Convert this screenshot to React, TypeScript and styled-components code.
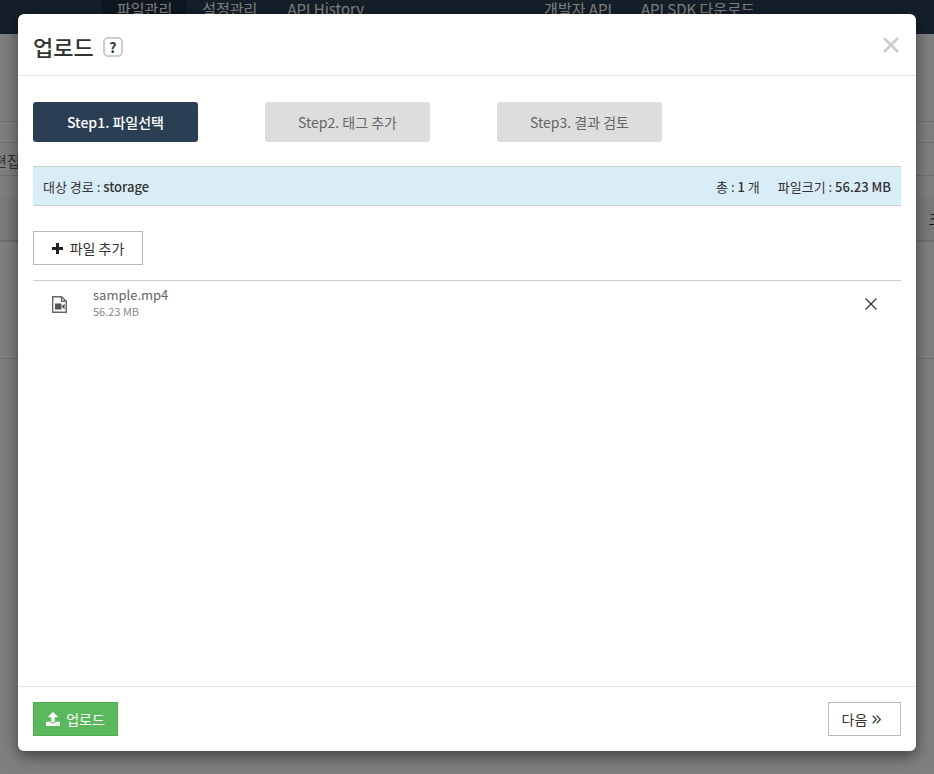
import * as React from "react";
import styled, { createGlobalStyle } from "styled-components";
import { FaUpload } from "react-icons/fa";

const GlobalStyle = createGlobalStyle`
  html, body {
    margin: 0;
    padding: 0;
    height: 100%;
    overflow: hidden;
    background: #fff;
    font-family: "Noto Sans CJK KR", "Noto Sans", sans-serif;
    font-size: 14px;
    color: #333;
  }
  * {
    box-sizing: border-box;
  }
`;

/* page behind the dialog */
const Page = styled.div`
  height: 774px;
  overflow: hidden;
`;

const TopBar = styled.div`
  display: flex;
  height: 34px;
  padding-left: 102px;
  background: #2a3f54;
`;

const NavItem = styled.div<{ $active?: boolean; $gap?: number }>`
  height: 34px;
  margin-top: -11px;
  padding: 0 15px;
  margin-right: ${(p) => p.$gap ?? 0}px;
  line-height: 40px;
  font-size: 15px;
  white-space: nowrap;
  color: #fff;
  background: ${(p) => (p.$active ? "#1f3040" : "transparent")};
`;

const BackRow = styled.div<{ $height: number; $shade?: boolean; $thick?: boolean; $plain?: boolean }>`
  display: flex;
  align-items: center;
  justify-content: space-between;
  height: ${(p) => p.$height}px;
  border-bottom: ${(p) => (p.$plain ? "none" : `${p.$thick ? 2 : 1}px solid #ddd`)};
  background: ${(p) => (p.$shade ? "#f5f5f5" : "#fff")};
  white-space: nowrap;
  overflow: hidden;
`;

const BackLabel = styled.span<{ $right?: boolean }>`
  font-size: 15px;
  color: ${(p) => (p.$right ? "#333" : "#666")};
  margin-top: ${(p) => (p.$right ? "0" : "2px")};
  margin-left: ${(p) => (p.$right ? "auto" : "-7px")};
  margin-right: ${(p) => (p.$right ? "-22px" : "0")};
`;

const Overlay = styled.div`
  position: absolute;
  inset: 0;
  background: rgba(0, 0, 0, 0.5);
`;

/* dialog */
const Dialog = styled.div`
  position: absolute;
  left: 18px;
  top: 14px;
  width: 898px;
  height: 737px;
  display: flex;
  flex-direction: column;
  background: #fff;
  border-radius: 6px;
  box-shadow: 0 5px 15px rgba(0, 0, 0, 0.5);
`;

const Header = styled.div`
  display: flex;
  align-items: center;
  height: 62px;
  padding: 0 17px 0 15px;
  border-bottom: 1px solid #e5e5e5;
`;

const Title = styled.h4`
  margin: 2px 0 0;
  font-size: 22px;
  font-weight: 500;
  line-height: 30px;
  color: #333;
`;

const HelpBadge = styled.span`
  display: flex;
  align-items: center;
  justify-content: center;
  width: 20px;
  height: 20px;
  margin: 4px 0 0 9px;
  border: 2px solid #ccc;
  border-radius: 5px;
  font-size: 14px;
  font-weight: 700;
  color: #333;
`;

const CloseIcon = styled.svg`
  display: block;
  width: 16px;
  height: 16px;
  margin-left: auto;
  margin-top: 1px;
`;

const Body = styled.div`
  flex: 1;
  padding: 26px 15px 0;
`;

const Steps = styled.div`
  display: flex;
  gap: 67px;
`;

const Step = styled.div<{ $active?: boolean }>`
  display: flex;
  align-items: center;
  justify-content: center;
  width: 165px;
  height: 40px;
  border-radius: 3px;
  font-size: 14px;
  font-weight: ${(p) => (p.$active ? 500 : 400)};
  color: ${(p) => (p.$active ? "#fff" : "#666")};
  background: ${(p) => (p.$active ? "#2a3f54" : "#ddd")};
`;

const InfoBar = styled.div`
  display: flex;
  align-items: center;
  justify-content: space-between;
  height: 40px;
  margin-top: 24px;
  padding: 0 10px;
  background: #d9edf7;
  border-top: 1px solid #ccc;
  border-bottom: 1px solid #ccc;
  font-size: 13px;
  color: #333;

  b {
    font-weight: 500;
  }
`;

const InfoRight = styled.div`
  display: flex;
  gap: 18px;
`;

const AddButton = styled.button`
  display: flex;
  align-items: center;
  justify-content: center;
  gap: 7px;
  width: 110px;
  height: 34px;
  margin-top: 25px;
  padding: 0;
  background: #fff;
  border: 1px solid #bbb;
  font: inherit;
  color: #333;
`;

const PlusIcon = styled.svg`
  display: block;
  width: 11px;
  height: 11px;
`;

const FileList = styled.div`
  margin-top: 15px;
  border-top: 1px solid #ccc;
`;

const FileRow = styled.div`
  display: flex;
  align-items: center;
  height: 46px;
  padding: 0 24px 0 19px;
`;

const FileGlyph = styled.svg`
  display: block;
  width: 15px;
  height: 17px;
  margin-top: 1px;
`;

const FileText = styled.div`
  display: flex;
  flex-direction: column;
  margin: -2px 0 0 26px;
`;

const FileName = styled.span`
  font-size: 13px;
  line-height: 16px;
  color: #666;
`;

const FileSize = styled.span`
  font-size: 11px;
  line-height: 16px;
  color: #888;
`;

const RemoveIcon = styled.svg`
  display: block;
  width: 12px;
  height: 12px;
  margin-left: auto;
`;

const Footer = styled.div`
  display: flex;
  align-items: center;
  justify-content: space-between;
  height: 65px;
  padding: 0 15px;
  border-top: 1px solid #e5e5e5;
`;

const UploadButton = styled.button`
  display: flex;
  align-items: center;
  justify-content: center;
  gap: 6px;
  width: 85px;
  height: 34px;
  padding: 0;
  background: #5cb85c;
  border: 1px solid #4cae4c;
  font: inherit;
  color: #fff;

  svg {
    width: 14px;
    height: 14px;
  }
`;

const NextButton = styled.button`
  display: flex;
  align-items: center;
  justify-content: center;
  gap: 5px;
  width: 73px;
  height: 34px;
  padding: 0 6px 0 0;
  background: #fff;
  border: 1px solid #bbb;
  font: inherit;
  color: #333;
`;

const ChevronIcon = styled.svg`
  display: block;
  width: 9px;
  height: 9px;
  margin-top: 1px;
`;

export default function App() {
  return (
    <>
      <GlobalStyle />
      <Page>
        <TopBar>
          <NavItem $active>파일관리</NavItem>
          <NavItem>설정관리</NavItem>
          <NavItem $gap={150}>API History</NavItem>
          <NavItem $gap={-1}>개발자 API</NavItem>
          <NavItem>API SDK 다운로드</NavItem>
        </TopBar>
        <BackRow $height={88} />
        <BackRow $height={21} />
        <BackRow $height={33}>
          <BackLabel>편집</BackLabel>
        </BackRow>
        <BackRow $height={21} $plain />
        <BackRow $height={45} $shade $thick>
          <BackLabel $right>크기</BackLabel>
        </BackRow>
        <BackRow $height={117} />
      </Page>
      <Overlay />
      <Dialog>
        <Header>
          <Title>업로드</Title>
          <HelpBadge>?</HelpBadge>
          <CloseIcon viewBox="0 0 16 16" fill="none" stroke="#ccc" strokeWidth="2.6">
            <path d="M1 1 L15 15 M15 1 L1 15" />
          </CloseIcon>
        </Header>
        <Body>
          <Steps>
            <Step $active>Step1. 파일선택</Step>
            <Step>Step2. 태그 추가</Step>
            <Step>Step3. 결과 검토</Step>
          </Steps>
          <InfoBar>
            <span>
              대상 경로 : <b>storage</b>
            </span>
            <InfoRight>
              <span>
                총 : <b>1</b> 개
              </span>
              <span>
                파일크기 : <b>56.23 MB</b>
              </span>
            </InfoRight>
          </InfoBar>
          <AddButton>
            <PlusIcon viewBox="0 0 11 11" fill="#222">
              <path d="M4 0 H7 V4 H11 V7 H7 V11 H4 V7 H0 V4 H4 Z" />
            </PlusIcon>
            파일 추가
          </AddButton>
          <FileList>
            <FileRow>
              <FileGlyph viewBox="0 0 15 17">
                <path d="M0.7 0.7 H9.5 L14.3 5.2 V16.3 H0.7 Z M9.5 0.7 V5.2 H14.3" fill="none" stroke="#666" strokeWidth="1.4" />
                <rect x="3" y="7.5" width="6.5" height="6" fill="#555" />
                <path d="M9.5 10.5 L12.6 7.5 V13.5 Z" fill="#555" />
              </FileGlyph>
              <FileText>
                <FileName>sample.mp4</FileName>
                <FileSize>56.23 MB</FileSize>
              </FileText>
              <RemoveIcon viewBox="0 0 12 12" fill="none" stroke="#333" strokeWidth="1.2">
                <path d="M0.5 0.5 L11.5 11.5 M11.5 0.5 L0.5 11.5" />
              </RemoveIcon>
            </FileRow>
          </FileList>
        </Body>
        <Footer>
          <UploadButton>
            <FaUpload />
            업로드
          </UploadButton>
          <NextButton>
            다음
            <ChevronIcon viewBox="0 0 9 9" fill="none" stroke="#444" strokeWidth="1.4">
              <path d="M0.7 0.6 L4.3 4.5 L0.7 8.4 M4.7 0.6 L8.3 4.5 L4.7 8.4" />
            </ChevronIcon>
          </NextButton>
        </Footer>
      </Dialog>
    </>
  );
}
